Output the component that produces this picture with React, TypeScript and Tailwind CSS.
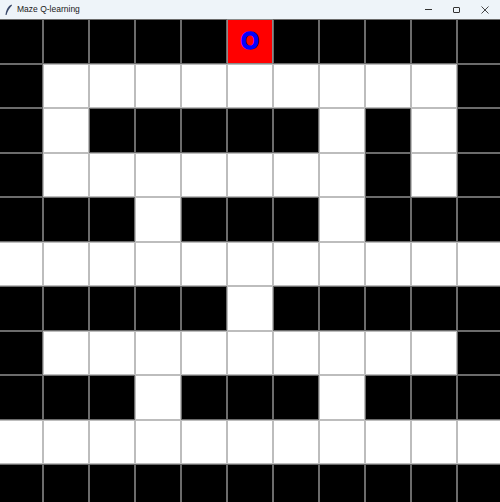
import React from 'react';

// 0 = wall, 1 = open, 2 = agent
const MAZE: number[][] = [
  [0, 0, 0, 0, 0, 2, 0, 0, 0, 0, 0],
  [0, 1, 1, 1, 1, 1, 1, 1, 1, 1, 0],
  [0, 1, 0, 0, 0, 0, 0, 1, 0, 1, 0],
  [0, 1, 1, 1, 1, 1, 1, 1, 0, 1, 0],
  [0, 0, 0, 1, 0, 0, 0, 1, 0, 0, 0],
  [1, 1, 1, 1, 1, 1, 1, 1, 1, 1, 1],
  [0, 0, 0, 0, 0, 1, 0, 0, 0, 0, 0],
  [0, 1, 1, 1, 1, 1, 1, 1, 1, 1, 0],
  [0, 0, 0, 1, 0, 0, 0, 1, 0, 0, 0],
  [1, 1, 1, 1, 1, 1, 1, 1, 1, 1, 1],
  [0, 0, 0, 0, 0, 0, 0, 0, 0, 0, 0],
];

const TitleBar: React.FC = () => (
  <div className="h-[19px] flex items-center bg-[#eef4f9] relative font-['Liberation_Sans',sans-serif]">
    <svg className="ml-[4px]" width="9" height="12" viewBox="0 0 9 12">
      <path d="M7.5 0.5 C4 2 2 6 1.5 11 L2.5 11 C3.5 7 5.5 4 8 1.5 Z" fill="#3b4a6b" />
    </svg>
    <span className="ml-[4px] text-[8.5px] leading-none text-[#1a1a1a]">Maze Q-learning</span>
    <div className="ml-auto flex items-center h-full">
      <div className="w-[28px] flex justify-center">
        <div className="w-[7px] h-px bg-[#333]" />
      </div>
      <div className="w-[28px] flex justify-center">
        <div className="w-[7px] h-[6px] border border-[#333] rounded-[1px]" />
      </div>
      <div className="w-[30px] flex justify-center">
        <svg width="8" height="8" viewBox="0 0 8 8">
          <path d="M0.5 0.5 L7.5 7.5 M7.5 0.5 L0.5 7.5" stroke="#333" strokeWidth="0.9" />
        </svg>
      </div>
    </div>
  </div>
);

const Cell: React.FC<{ kind: number }> = ({ kind }) => {
  if (kind === 2) {
    return (
      <div className="border border-[#8a8a8a] bg-[#ff0000] flex items-center justify-center">
        <span className="text-[23px] font-bold leading-none text-[#0000ff] font-['Liberation_Sans',sans-serif] [-webkit-text-stroke:1.5px_#0000ff]">O</span>
      </div>
    );
  }
  if (kind === 1) {
    return <div className="border border-[#bdbdbd] bg-white" />;
  }
  return <div className="border border-[#6b6b6b] bg-black" />;
};

const App: React.FC = () => {
  return (
    <div className="w-[500px] h-[502px] overflow-hidden bg-white">
      <TitleBar />
      <div className="ml-[-3px] grid grid-cols-[repeat(11,46px)] grid-rows-[repeat(11,44.5px)]">
        {MAZE.map((row, r) =>
          row.map((kind, c) => <Cell key={`${r}-${c}`} kind={kind} />)
        )}
      </div>
    </div>
  );
};

export default App;
